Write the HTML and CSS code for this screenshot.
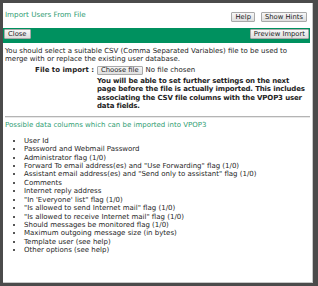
FILE: index.html
```html
<!DOCTYPE html>
<html lang="en">
<head>
  <meta charset="UTF-8">
  <title>Import Users From File</title>
  <link rel="stylesheet" href="styles.css">
</head>
<body>
  <div class="dialog">
    <!-- Title row -->
    <div class="title-row">
      <span class="title">Import Users From File</span>
      <div class="title-buttons">
        <button class="btn">Help</button>
        <button class="btn">Show Hints</button>
      </div>
    </div>

    <!-- Toolbar -->
    <div class="toolbar">
      <button class="btn">Close</button>
      <button class="btn">Preview Import</button>
    </div>

    <div class="content">
      <p class="intro">You should select a suitable CSV (Comma Separated Variables) file to be used to merge with or replace the existing user database.</p>

      <div class="file-row">
        <label class="file-label">File to import :</label>
        <div class="file-value">
          <div class="file-input">
            <button class="btn btn-small">Choose file</button>
            <span>No file chosen</span>
          </div>
          <p class="note">You will be able to set further settings on the next page before the file is actually imported. This includes associating the CSV file columns with the VPOP3 user data fields.</p>
        </div>
      </div>

      <hr>

      <h3 class="section">Possible data columns which can be imported into VPOP3</h3>
      <ul class="columns">
        <li>User Id</li>
        <li>Password and Webmail Password</li>
        <li>Administrator flag (1/0)</li>
        <li>Forward To email address(es) and "Use Forwarding" flag (1/0)</li>
        <li>Assistant email address(es) and "Send only to assistant" flag (1/0)</li>
        <li>Comments</li>
        <li>Internet reply address</li>
        <li>"In 'Everyone' list" flag (1/0)</li>
        <li>"Is allowed to send Internet mail" flag (1/0)</li>
        <li>"Is allowed to receive Internet mail" flag (1/0)</li>
        <li>Should messages be monitored flag (1/0)</li>
        <li>Maximum outgoing message size (in bytes)</li>
        <li>Template user (see help)</li>
        <li>Other options (see help)</li>
      </ul>
    </div>
  </div>
</body>
</html>
```

FILE: styles.css
```css
/* Dialog frame */
html, body {
  margin: 0;
  padding: 0;
  background: #4b4b4b;
  height: 286px;
  overflow: hidden;
}

body {
  font-family: "DejaVu Sans", sans-serif;
  font-size: 7px;
  line-height: 8.4px;
  color: #1e1e1e;
}

.dialog {
  margin: 3px 0 0 3px;
  width: 307px;
  height: 278px;
  padding: 0 2px 1px 0;
  background: #fff;
  border-right: 1px solid #c8c8c8;
  border-bottom: 1px solid #c8c8c8;
}

/* Buttons */
.btn {
  font-family: inherit;
  font-size: 6.8px;
  line-height: 8px;
  color: #222;
  height: 10px;
  padding: 0 3px;
  margin: 0;
  border: 1px solid #a9a9a9;
  border-radius: 1px;
  background: linear-gradient(#f7f7f7, #dedede);
}

.btn-small {
  height: 9px;
  line-height: 7px;
}

/* Title row */
.title-row {
  height: 25px;
  display: flex;
  justify-content: space-between;
  align-items: center;
  padding: 0 3px 0 2px;
}

.title {
  color: #2f9d72;
  font-size: 7.2px;
}

.title-buttons {
  display: flex;
  gap: 6px;
  margin-top: 2px;
}

/* Green toolbar */
.toolbar {
  height: 15px;
  box-sizing: border-box;
  padding: 1px;
  display: flex;
  justify-content: space-between;
  align-items: flex-start;
  background: #00915f;
}

.content {
  padding: 4px 0 0 2px;
}

.intro {
  margin: 0;
}

/* File row */
.file-row {
  display: grid;
  grid-template-columns: 89px 1fr;
  column-gap: 3px;
  margin-top: 2px;
}

.file-label {
  font-weight: bold;
  text-align: right;
}

.file-input {
  display: flex;
  align-items: center;
  gap: 3px;
}

.note {
  margin: 2px 0 0;
  font-weight: bold;
  letter-spacing: -0.15px;
}

hr {
  border: none;
  border-top: 1px solid #b4b4b4;
  border-bottom: 1px solid #e8e8e8;
  margin: 6px 0 0;
}

.section {
  margin: 3px 0 0;
  font-size: 7px;
  font-weight: normal;
  color: #2f9d72;
}

.columns {
  margin: 7px 0 0;
  padding-left: 19px;
}
```
